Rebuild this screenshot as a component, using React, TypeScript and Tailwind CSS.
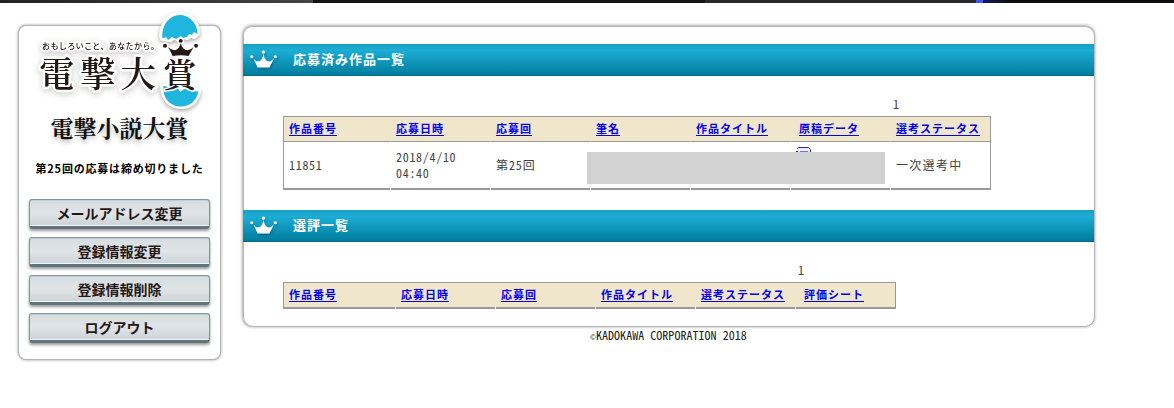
import React from 'react';

const sans = "font-['Noto_Sans_CJK_JP',sans-serif]";
const mono = "font-['Noto_Sans_Mono_CJK_JP','Noto_Sans_CJK_JP',monospace]";

function Crown({ className, fill }: { className: string; fill: string }) {
  return (
    <svg className={className} viewBox="0 0 28 18" fill={fill}>
      <circle cx="1.9" cy="6.7" r="1.6" />
      <circle cx="14" cy="1.9" r="1.6" />
      <circle cx="26.2" cy="6.7" r="1.6" />
      <path d="M3.5 8.5 Q8 14 12 9.5 Q13.4 7.8 13.7 4.3 H14.3 Q14.6 7.8 16 9.5 Q20 14 24.7 8.5 Q22.5 13 20.3 17.8 H7.8 Q5.8 13 3.5 8.5Z" />
    </svg>
  );
}

function Logo() {
  const serif = "font-['Noto_Serif_CJK_JP','Noto_Sans_CJK_JP',sans-serif]";
  return (
    <svg className="block h-[106px] w-[190px] overflow-visible" viewBox="25 8 190 106">
      <g className="[filter:drop-shadow(0_2px_2px_#0005)]" strokeLinejoin="round" fill="#fff" stroke="#fff" strokeWidth="6">
        <path d="M162.5 38 C161 26 169 15 180 15 C191 15 198 26 197 33 L194 36 L191 34 L187 37 L183 35 L179 39 L174 36 L170 39Z" />
        <path d="M163 85 L169 88 L175 87 L181 91 L186 89 L190 92 L198 91 C197 100 190 106 181 106 C171 106 163 99 163 85Z" />
      </g>
      <g className="[filter:drop-shadow(0_2px_3px_#0003)]" fill="#231815" stroke="#fff" strokeWidth="5" strokeLinejoin="round" paintOrder="stroke">
        <text y="86.5" fontSize="35.5" fontWeight="600" className={serif}>
          <tspan x="39">電</tspan><tspan x="80">撃</tspan><tspan x="120.5">大</tspan>
        </text>
        <text x="42" y="48.5" fontSize="8.2" strokeWidth="4" fontWeight="500" textLength="117" className={sans}>おもしろいこと、あなたから。</text>
      </g>
      <g fill="#1fb6de">
        <path d="M162.5 38.5 C161 26 169 15 180 15 C190 15 198 25 197.5 34 L194 32 L192 35 L189 34 L187 37 L183 38 L181 36 L176 39 L172 37 L168 40 L166 37Z" />
        <path d="M163.3 86 L167 86.5 L170 89 L178 88.5 L180 92 L185 88.5 L189 91 L198.5 91.5 C197 100 190 106.5 181 106.5 C171 106.5 162.5 99 163.3 86Z" />
      </g>
      <g fill="#231815" stroke="#fff" strokeWidth="3" paintOrder="stroke" strokeLinejoin="round">
        <text x="163" y="87" fontSize="33.5" fontWeight="600" className={serif}>賞</text>
        <circle cx="165" cy="45.8" r="2" /><circle cx="180.7" cy="41" r="2" /><circle cx="196" cy="45.8" r="2" />
        <path strokeWidth="2" d="M168 47 Q174 53 178.5 48 Q180 46.5 180.4 43.5 H181 Q181.4 46.5 183 48 Q188 53 193.5 47 Q191 52 188.5 56 Q181 54.5 172.5 56 Q171 52 168 47Z" />
      </g>
    </svg>
  );
}

function SideButton({ label }: { label: string }) {
  return (
    <button className="flex h-[30px] w-[181px] shrink-0 items-center justify-center rounded-[3px] border border-b-[3px] border-[#84949c] border-b-[#60747d] bg-gradient-to-b from-[#d5dcdf] via-[#e0e4e6] to-[#cbd2d5] text-[14px] font-bold leading-[20px] text-[#231815] shadow-[0_2px_3px_#0006,inset_0_-1px_0_#f1f6f7,inset_0_1px_0_#c1cdd2]">
      {label}
    </button>
  );
}

function Heading({ children }: { children: string }) {
  return (
    <h2 className="flex h-8 w-[851px] items-center bg-gradient-to-b from-[#1a9fc5] from-0% via-[#1badd5] via-20% to-[#007b9c] pl-[7px] text-[13px] font-bold tracking-[1px] text-white shadow-[inset_0_-1px_0_#006b89]">
      <Crown className="-mt-[2px] h-[18px] w-[27px] [filter:drop-shadow(1px_2px_1px_#0056708c)]" fill="#fff" />
      <span className="-mt-[3px] ml-[16px]">{children}</span>
    </h2>
  );
}

function HeaderCell({ children, inset }: { children: string; inset?: boolean }) {
  return (
    <div className={`whitespace-nowrap bg-[#f0e6cc] ${inset ? 'pl-[8px]' : 'pl-[5px]'} pt-[2px] text-[11px] font-bold leading-[18px] tracking-[1px] text-[#0000ee] underline underline-offset-[2px]`}>{children}</div>
  );
}

/* Horizontal rule split into one segment per column. */
function Rule({ cols, thick }: { cols: string; thick?: boolean }) {
  const count = cols === 'works' ? 7 : 6;
  return (
    <div className={`grid ${cols === 'works' ? 'grid-cols-[107px_100px_100px_100px_100px_100px_99px]' : 'grid-cols-[112px_100px_100px_100px_100px_99px]'} ${thick ? 'h-[2px]' : 'h-px'}`}>
      {Array.from({ length: count }, (_, i) => (
        <div key={i} className={`bg-[#999] ${i < count - 1 ? 'mr-px' : ''}`} />
      ))}
    </div>
  );
}

export default function App() {
  const works = ['作品番号', '応募日時', '応募回', '筆名', '作品タイトル', '原稿データ', '選考ステータス'];
  const reviews = ['作品番号', '応募日時', '応募回', '作品タイトル', '選考ステータス', '評価シート'];
  return (
    <div className={`h-[408px] w-[1174px] overflow-hidden bg-white ${sans}`}>
      <div className="flex h-[3px] bg-[#100f10]">
        <div className="w-[313px] bg-gradient-to-r from-[#222] to-[#444]" />
        <div className="w-[392px] bg-[#151313]" />
        <div className="w-[271px] bg-[#292729]" />
        <div className="w-[7px] bg-[#4355ee]" />
        <div className="w-[22px] bg-gradient-to-r from-[#17106b] to-[#100f10]" />
      </div>
      <div className="flex items-start pl-[19px] pt-[23px]">
        <aside className="mr-[23px] flex h-[333px] w-[201px] shrink-0 flex-col items-center rounded-[7px] bg-white shadow-[0_0_0_1px_#b5b5b5,0_0_3px_1px_#999]">
          <div className="-mt-[18px]"><Logo /></div>
          <h1 className="-mt-[3px] h-[36px] whitespace-nowrap font-['Noto_Serif_CJK_JP','Noto_Sans_CJK_JP',sans-serif] text-[23px] font-bold leading-[34px] text-[#111] [text-shadow:0_3px_4px_#0004]">電撃小説大賞</h1>
          <p className="mt-[11px] h-[41px] whitespace-nowrap text-[11px] font-bold leading-[20px] tracking-[0.8px] text-black">第25回の応募は締め切りました</p>
          <nav className="flex flex-col gap-[8px]">
            {['メールアドレス変更', '登録情報変更', '登録情報削除', 'ログアウト'].map((s) => <SideButton key={s} label={s} />)}
          </nav>
        </aside>
        <div className="w-[851px] shrink-0">
          <main className="h-[300px] rounded-[9px] bg-white pt-[18px] shadow-[inset_1px_0_0_#b5b5b5,0_1px_0_#b5b5b5,inset_0_1px_0_#b5b5b5,1px_0_0_#b5b5b5,0_0_3px_1px_#aaa]">
            <Heading>応募済み作品一覧</Heading>
            <div className={`h-[40px] pl-[650px] pt-[19px] text-[12px] leading-[18px] text-[#444] ${mono}`}>1</div>
            <div className="ml-[40px] w-[708px] border-x border-t border-[#999]">
              <div className="grid h-6 grid-cols-[107px_100px_100px_100px_100px_100px_99px]">
                {works.map((s, i) => <HeaderCell key={s} inset={i === 5}>{s}</HeaderCell>)}
              </div>
              <Rule cols="works" />
              <div className={`relative grid h-[46px] grid-cols-[107px_100px_400px_99px] items-center pb-px text-[12px] leading-4 tracking-[0.7px] text-[#444] ${mono}`}>
                <div className="pl-[5px]">11851</div>
                <div className="pl-[5px]">2018/4/10<br />04:40</div>
                <div className="pl-[5px] tracking-[0.9px]">第25回</div>
                <div className="whitespace-nowrap pl-[5px] tracking-[1.3px]">一次選考中</div>
                <svg className="absolute left-[512px] top-[5px] h-[6px] w-[17px]" viewBox="0 0 17 6">
                  <path d="M1.5 1.5L2.5 .5H12.5L14.5 2.5V6H1.5Z" fill="#eceaff" />
                  <path d="M1.5 2V1.5L2.5 .5H12.5L14.5 2.5V5M0 4.5H2" fill="none" stroke="#302b80" />
                  <path d="M4 4.5H12" stroke="#7774d8" />
                </svg>
                <div className="absolute left-[303px] top-[10px] h-8 w-[298px] bg-[#d2d2d2]" />
              </div>
              <Rule cols="works" thick />
            </div>
            <div className="h-5" />
            <Heading>選評一覧</Heading>
            <div className={`h-[40px] pl-[555px] pt-[19px] text-[12px] leading-[18px] text-[#444] ${mono}`}>1</div>
            <div className="ml-[40px] w-[613px] border-x border-t border-[#999]">
              <div className="grid h-6 grid-cols-[112px_100px_100px_100px_100px_99px]">
                {reviews.map((s, i) => <HeaderCell key={s} inset={i === 5}>{s}</HeaderCell>)}
              </div>
              <Rule cols="reviews" thick />
            </div>
          </main>
          <footer className={`pl-[347px] pt-px text-[12px] leading-4 tracking-[0.03px] text-[#222] ${mono}`}><span className="inline-block w-[6px] font-['Liberation_Sans',sans-serif] text-[8px]">©</span>KADOKAWA CORPORATION 2018</footer>
        </div>
      </div>
    </div>
  );
}
